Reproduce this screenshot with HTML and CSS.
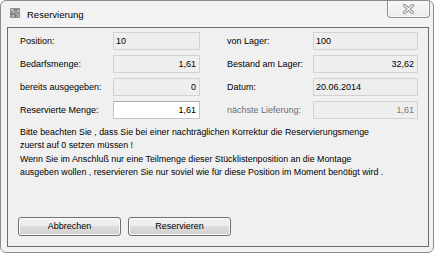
FILE: index.html
```html
<!DOCTYPE html>
<html lang="de">
<head>
<meta charset="utf-8">
<title>Reservierung</title>
<link rel="stylesheet" href="styles.css">
</head>
<body>
<div class="window">
  <div class="titlebar">
    <svg class="app-icon" width="10" height="10" viewBox="0 0 10 10">
      <rect width="10" height="10" fill="#8f8f8f"/>
      <rect x="1" y="1" width="2" height="2" fill="#c4c4c4"/>
      <rect x="5" y="1" width="2" height="1" fill="#6a6a6a"/>
      <rect x="3" y="3" width="2" height="2" fill="#b5b5b5"/>
      <rect x="7" y="2" width="2" height="2" fill="#bdbdbd"/>
      <rect x="1" y="5" width="1" height="2" fill="#6d6d6d"/>
      <rect x="6" y="5" width="2" height="2" fill="#a8a8a8"/>
      <rect x="2" y="7" width="2" height="2" fill="#b9b9b9"/>
      <rect x="5" y="7" width="1" height="2" fill="#747474"/>
      <rect x="8" y="7" width="1" height="2" fill="#c0c0c0"/>
      <rect x="4" y="5" width="1" height="1" fill="#5f5f5f"/>
    </svg>
    <span class="title">Reservierung</span>
    <div class="close-btn">
      <svg width="11" height="10" viewBox="0 0 11 10">
        <path d="M1.5 1.5 L9.5 8.5 M9.5 1.5 L1.5 8.5" stroke="#8d8d8d" stroke-width="3.2" stroke-linecap="square" fill="none"/>
        <path d="M1.5 1.5 L9.5 8.5 M9.5 1.5 L1.5 8.5" stroke="#f3f3f3" stroke-width="1.3" stroke-linecap="square" fill="none"/>
      </svg>
    </div>
  </div>
  <div class="client">
    <div class="form-grid">
      <span class="lbl">Position:</span>
      <span class="box">10</span>
      <span class="lbl lbl-right">von Lager:</span>
      <span class="box">100</span>

      <span class="lbl">Bedarfsmenge:</span>
      <span class="box num">1,61</span>
      <span class="lbl lbl-right">Bestand am Lager:</span>
      <span class="box num">32,62</span>

      <span class="lbl">bereits ausgegeben:</span>
      <span class="box num">0</span>
      <span class="lbl lbl-right">Datum:</span>
      <span class="box">20.06.2014</span>

      <span class="lbl">Reservierte Menge:</span>
      <span class="box num editable">1,61</span>
      <span class="lbl lbl-right disabled">nächste Lieferung:</span>
      <span class="box num disabled">1,61</span>
    </div>
    <p class="note note-first">Bitte beachten Sie , dass Sie bei einer nachträglichen Korrektur die Reservierungsmenge<br>zuerst auf 0 setzen müssen !</p>
    <p class="note note-second">Wenn Sie im Anschluß nur eine Teilmenge dieser Stücklistenposition an die Montage<br>ausgeben wollen , reservieren Sie nur soviel wie für diese Position im Moment benötigt wird .</p>
    <div class="buttons">
      <button class="btn" type="button">Abbrechen</button>
      <button class="btn" type="button">Reservieren</button>
    </div>
  </div>
</div>
</body>
</html>
```

FILE: styles.css
```css
html, body {
  margin: 0;
  padding: 0;
  background: #ffffff;
}

.window {
  box-sizing: border-box;
  width: 434px;
  height: 253px;
  border: 1px solid #8c8c8c;
  border-radius: 6px;
  background: #f2f2f2;
  display: flex;
  flex-direction: column;
  font-family: "Liberation Sans", Arial, sans-serif;
  color: #000;
  overflow: hidden;
}

.titlebar {
  height: 26px;
  flex-shrink: 0;
  display: flex;
  align-items: flex-start;
}

.app-icon {
  display: block;
  margin: 7px 0 0 9px;
}

.title {
  margin: 8px 0 0 7px;
  font-size: 9.5px;
  line-height: 12px;
  color: #000;
}

.close-btn {
  margin: -1px 3px 0 auto;
  box-sizing: border-box;
  width: 43px;
  height: 18px;
  border: 1px solid #8e8e8e;
  border-top: none;
  border-radius: 0 0 4px 4px;
  background: linear-gradient(#f7f7f7, #ececec);
  box-shadow: inset 0 0 0 1px #fbfbfb;
  display: flex;
  align-items: center;
  justify-content: center;
}

.close-btn svg {
  display: block;
  margin-top: 1px;
}

.client {
  flex: 1;
  margin: 0 4px 5px 6px;
  border: 1px solid #6e6e6e;
  background: #f0f0f0;
  display: flex;
  flex-direction: column;
}

.form-grid {
  display: grid;
  grid-template-columns: 93px 87px 113px 105px;
  grid-auto-rows: 18px;
  row-gap: 5px;
  padding: 4px 0 0 12px;
}

.lbl {
  font-size: 9px;
  line-height: 18px;
  white-space: nowrap;
  color: #000;
}

.lbl-right {
  padding-left: 27px;
}

.lbl.disabled {
  color: #6d6d6d;
}

.box {
  box-sizing: border-box;
  height: 18px;
  border: 1px solid #d2d2d2;
  background: #eeeeee;
  font-size: 9px;
  line-height: 16px;
  padding: 0 3px 0 2px;
  color: #000;
  white-space: nowrap;
}

.box.num {
  text-align: right;
}

.box.editable {
  background: #ffffff;
  border-color: #c2c4c8;
  border-top-color: #a9abb0;
}

.box.disabled {
  color: #7a7a7a;
}

.note {
  margin: 0;
  padding-left: 12px;
  font-size: 8.85px;
  line-height: 13px;
  white-space: nowrap;
  color: #000;
}

.note-first {
  margin-top: 7px;
}

.note-second {
  margin-top: 1px;
}

.buttons {
  margin-top: auto;
  display: flex;
  gap: 7px;
  padding: 0 0 10px 10px;
}

.btn {
  box-sizing: border-box;
  width: 103px;
  height: 19px;
  margin: 0;
  padding: 0;
  border: 1px solid #707070;
  border-radius: 3px;
  background: linear-gradient(#f2f2f2 0%, #ebebeb 50%, #dddddd 50%, #cfcfcf 100%);
  box-shadow: inset 0 0 0 1px #fbfbfb;
  font-family: "Liberation Sans", Arial, sans-serif;
  font-size: 9px;
  line-height: 17px;
  color: #000;
  text-align: center;
}
```
